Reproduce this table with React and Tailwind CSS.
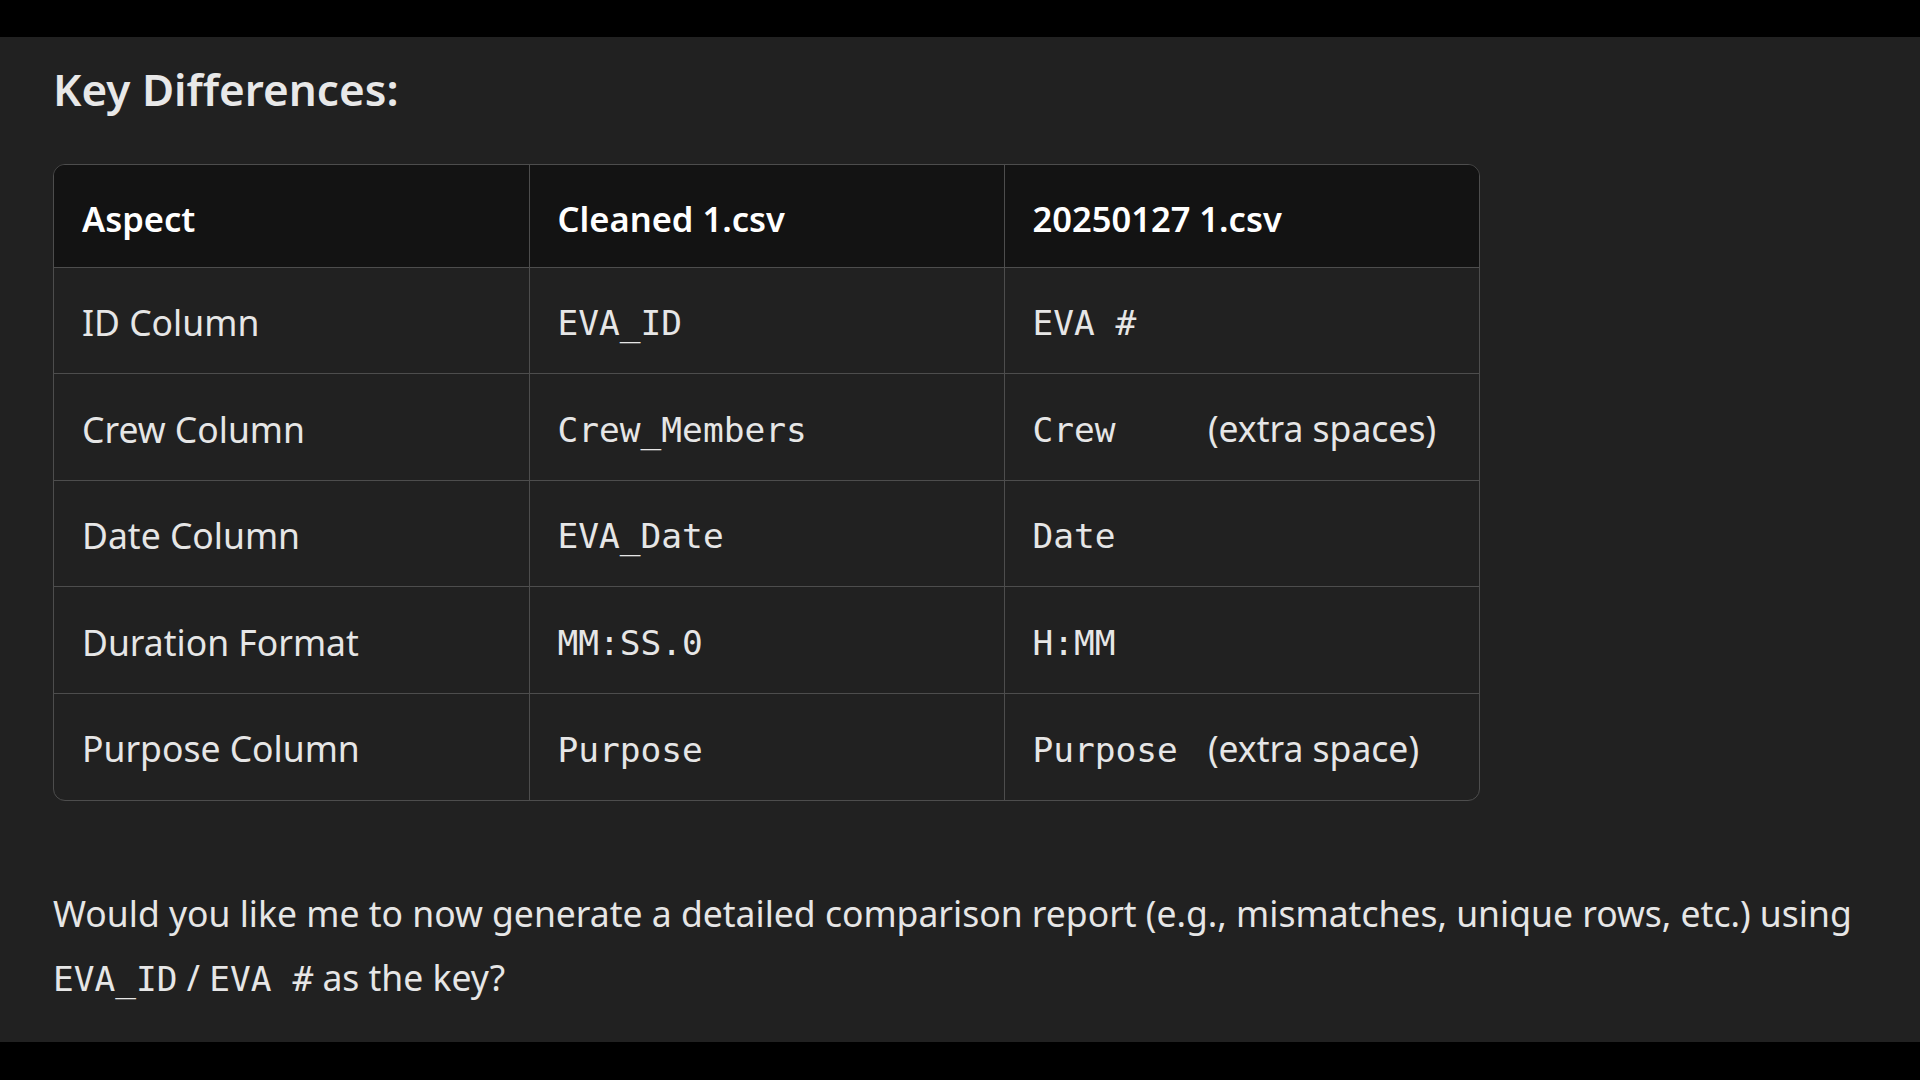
const rows = [
  { aspect: "ID Column", a: "EVA_ID", b: "EVA #", note: "" },
  { aspect: "Crew Column", a: "Crew_Members", b: "Crew    ", note: "(extra spaces)" },
  { aspect: "Date Column", a: "EVA_Date", b: "Date", note: "" },
  { aspect: "Duration Format", a: "MM:SS.0", b: "H:MM", note: "" },
  { aspect: "Purpose Column", a: "Purpose", b: "Purpose ", note: "(extra space)" },
];

function Code({ children }) {
  return (
    <code className="font-['DejaVu_Sans_Mono',monospace] text-[34.5px] whitespace-pre">
      {children}
    </code>
  );
}

export default function App() {
  return (
    <div className="h-screen flex flex-col bg-black font-['Noto_Sans',sans-serif] text-[#e6e6e6]">
      <div className="h-[37px] shrink-0 bg-black" />

      <main className="flex-1 bg-[#212121] pl-[53px] pt-[22px]">
        <h3 className="text-[44px] font-semibold leading-[60px] text-[#e8e8e8]">
          Key Differences:
        </h3>

        <div className="mt-[45px] w-[1427px] rounded-[12px] border border-[#4d4d4d] overflow-hidden">
          <table className="w-full table-fixed border-collapse text-[35.5px]">
            <thead>
              <tr className="bg-[#131313] h-[102px] text-[34.5px]">
                <th className="text-left font-semibold px-[28px] pt-[6px] text-white">Aspect</th>
                <th className="text-left font-semibold px-[28px] pt-[6px] text-white border-l border-[#4d4d4d]">
                  Cleaned 1.csv
                </th>
                <th className="text-left font-semibold px-[28px] pt-[6px] text-white border-l border-[#4d4d4d]">
                  20250127 1.csv
                </th>
              </tr>
            </thead>
            <tbody>
              {rows.map((r) => (
                <tr key={r.aspect} className="h-[106.5px] border-t border-[#4d4d4d]">
                  <td className="px-[28px] pt-[5px]">{r.aspect}</td>
                  <td className="px-[28px] pt-[5px] border-l border-[#4d4d4d]">
                    <Code>{r.a}</Code>
                  </td>
                  <td className="px-[28px] pt-[5px] border-l border-[#4d4d4d]">
                    <Code>{r.b}</Code>
                    {r.note && <span> {r.note}</span>}
                  </td>
                </tr>
              ))}
            </tbody>
          </table>
        </div>

        <p className="mt-[80px] max-w-[1840px] text-[35.5px] leading-[64px]">
          Would you like me to now generate a detailed comparison report (e.g., mismatches, unique
          rows, etc.) using <Code>EVA_ID</Code> / <Code>EVA #</Code> as the key?
        </p>
      </main>

      <div className="h-[38px] shrink-0 bg-black" />
    </div>
  );
}
